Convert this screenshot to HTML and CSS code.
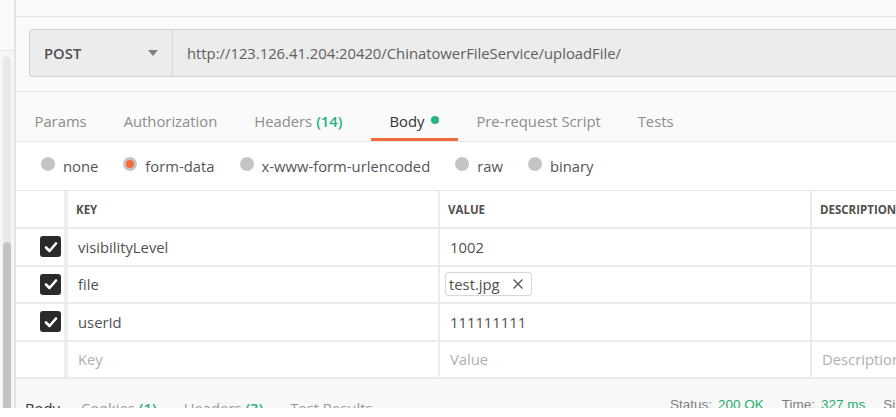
FILE: index.html
```html
<!DOCTYPE html>
<html>
<head>
<meta charset="utf-8">
<link rel="stylesheet" href="styles.css">
</head>
<body>
<div class="app">
  <aside class="sidebar">
    <div class="side-top"></div>
    <div class="side-body">
      <div class="track"><div class="thumb"></div></div>
    </div>
  </aside>
  <main class="main">
    <div class="top-strip"></div>
    <div class="url-area">
      <div class="url-bar">
        <div class="method">
          <span class="method-name">POST</span>
          <span class="caret"></span>
        </div>
        <div class="url-text">http://123.126.41.204:20420/ChinatowerFileService/uploadFile/</div>
      </div>
    </div>
    <nav class="tabs">
      <span class="tab">Params</span>
      <span class="tab">Authorization</span>
      <span class="tab">Headers <span class="count">(14)</span></span>
      <span class="tab active">Body <span class="dot"></span></span>
      <span class="tab">Pre-request Script</span>
      <span class="tab">Tests</span>
    </nav>
    <div class="radios">
      <label class="radio"><span class="circle"></span>none</label>
      <label class="radio"><span class="circle on"></span>form-data</label>
      <label class="radio"><span class="circle"></span>x-www-form-urlencoded</label>
      <label class="radio"><span class="circle"></span>raw</label>
      <label class="radio"><span class="circle"></span>binary</label>
    </div>
    <div class="table">
      <div class="row head">
        <div class="cell chk"></div>
        <div class="cell key">KEY</div>
        <div class="cell val">VALUE</div>
        <div class="cell desc">DESCRIPTION</div>
      </div>
      <div class="row">
        <div class="cell chk"><span class="checkbox"><svg width="14" height="12" viewBox="0 0 14 12"><path d="M2 6.5 L5.5 10 L12 2.5" fill="none" stroke="#fff" stroke-width="2.6" stroke-linecap="round" stroke-linejoin="round"/></svg></span></div>
        <div class="cell key">visibilityLevel</div>
        <div class="cell val">1002</div>
        <div class="cell desc"></div>
      </div>
      <div class="row">
        <div class="cell chk"><span class="checkbox"><svg width="14" height="12" viewBox="0 0 14 12"><path d="M2 6.5 L5.5 10 L12 2.5" fill="none" stroke="#fff" stroke-width="2.6" stroke-linecap="round" stroke-linejoin="round"/></svg></span></div>
        <div class="cell key">file</div>
        <div class="cell val file-cell"><span class="chip">test.jpg<svg class="x" width="12" height="12" viewBox="0 0 12 12"><path d="M1.5 1.5 L10.5 10.5 M10.5 1.5 L1.5 10.5" stroke="#555" stroke-width="1.4" fill="none"/></svg></span></div>
        <div class="cell desc"></div>
      </div>
      <div class="row">
        <div class="cell chk"><span class="checkbox"><svg width="14" height="12" viewBox="0 0 14 12"><path d="M2 6.5 L5.5 10 L12 2.5" fill="none" stroke="#fff" stroke-width="2.6" stroke-linecap="round" stroke-linejoin="round"/></svg></span></div>
        <div class="cell key">userId</div>
        <div class="cell val">111111111</div>
        <div class="cell desc"></div>
      </div>
      <div class="row">
        <div class="cell chk"></div>
        <div class="cell key ph">Key</div>
        <div class="cell val ph">Value</div>
        <div class="cell desc ph">Description</div>
      </div>
    </div>
    <div class="footer">
      <div class="resp-tabs">
        <span class="rtab active">Body</span>
        <span class="rtab">Cookies <span class="count">(1)</span></span>
        <span class="rtab">Headers <span class="count">(3)</span></span>
        <span class="rtab">Test Results</span>
      </div>
      <div class="status">
        <span>Status:</span><span class="green">200 OK</span>
        <span class="sp">Time:</span><span class="green">327 ms</span>
        <span class="sp">Size:</span><span class="green">263 B</span>
      </div>
    </div>
  </main>
</div>
<div class="cut"></div>
</body>
</html>
```
FILE: styles.css
```css
* { box-sizing: border-box; }
html, body { margin: 0; padding: 0; }
body {
  width: 896px;
  height: 417px;
  overflow: hidden;
  background: #fff;
  font-family: "Open Sans", "Noto Sans", sans-serif;
  font-size: 14.8px;
  color: #505050;
}
.app {
  display: flex;
  height: 408px;
}
.cut { height: 9px; background: #fff; }

.sidebar {
  width: 16px;
  flex: none;
  border-right: 2px solid #e3e3e3;
  display: flex;
  flex-direction: column;
  background: #f6f6f6;
}
.side-top {
  height: 51px;
  background: #fafafa;
  border-bottom: 1px solid #e6e6e6;
}
.side-body {
  flex: 1;
  padding: 5px 3px 0 3px;
  display: flex;
}
.track {
  width: 8px;
  flex: 1;
  background: #e9e9e9;
  border-radius: 4px 4px 0 0;
  display: flex;
  flex-direction: column;
  justify-content: flex-end;
}
.thumb {
  height: 166px;
  background: #c4c4c4;
  border-radius: 4px 4px 0 0;
}

.main {
  flex: 1;
  min-width: 0;
  overflow: hidden;
  display: flex;
  flex-direction: column;
  background: #fafafa;
}
.top-strip {
  height: 17px;
  flex: none;
  border-bottom: 1px solid #e6e6e6;
}
.url-area {
  height: 75px;
  flex: none;
  padding: 12px 0 0 13px;
  border-bottom: 1px solid #e6e6e6;
}
.url-bar {
  width: 1000px;
  height: 48px;
  display: flex;
  background: #ececec;
  border: 1px solid #d3d3d3;
  border-radius: 3px;
}
.method {
  width: 143px;
  flex: none;
  display: flex;
  align-items: center;
  justify-content: space-between;
  padding: 0 14px 0 14px;
  border-right: 1px solid #d6d6d6;
}
.method-name {
  font-weight: 600;
  color: #505050;
}
.caret {
  width: 0;
  height: 0;
  border-left: 5px solid transparent;
  border-right: 5px solid transparent;
  border-top: 6px solid #808080;
}
.url-text {
  display: flex;
  align-items: center;
  padding-left: 14px;
  color: #606060;
  white-space: nowrap;
}

.tabs {
  height: 50px;
  flex: none;
  display: flex;
  align-items: stretch;
  border-bottom: 1px solid #e6e6e6;
}
.tab {
  display: flex;
  align-items: center;
  gap: 4px;
  padding: 12px 18.5px 0;
  color: #8c8c8c;
  border-bottom: 3px solid transparent;
  white-space: nowrap;
}
.tab.active {
  color: #333;
  border-bottom-color: #f26b3a;
  gap: 7px;
  margin-left: 10px;
}
.count { color: #26b47f; font-weight: 600; }
.dot {
  width: 8px;
  height: 8px;
  border-radius: 50%;
  background: #26b47f;
  margin-top: -3px;
}

.radios {
  height: 48px;
  flex: none;
  background: #fff;
  display: flex;
  align-items: center;
  gap: 25px;
  padding: 0 0 0 25px;
}
.radio {
  display: flex;
  align-items: center;
  gap: 8px;
  color: #555;
}
.circle {
  width: 14px;
  height: 14px;
  border-radius: 50%;
  background: #c4c4c4;
  margin-top: -5px;
  display: flex;
  align-items: center;
  justify-content: center;
}
.circle.on::after {
  content: "";
  width: 8px;
  height: 8px;
  border-radius: 50%;
  background: #f26b3a;
}

.table {
  flex: none;
  background: #fff;
  border-top: 1px solid #e6e6e6;
}
.row {
  display: grid;
  grid-template-columns: 52px 372px 372px 1fr;
  height: 37.5px;
  border-bottom: 2px solid #ebebeb;
}
.row.head { height: 38px; }
.cell {
  display: flex;
  align-items: center;
  padding-left: 10px;
  white-space: nowrap;
  overflow: hidden;
  border-right: 2px solid #ebebeb;
}
.cell.chk {
  border-right: 4px solid #eeeeee;
  justify-content: flex-end;
  padding: 0 3px 0 0;
}
.cell.desc { border-right: none; }
.head .cell {
  font-size: 11.5px;
  font-weight: 700;
  color: #505050;
  padding-left: 8px;
}
.head .cell.chk { padding-left: 0; }
.checkbox {
  width: 21px;
  height: 21px;
  border-radius: 3px;
  background: #2a2a2a;
  display: flex;
  align-items: center;
  justify-content: center;
}
.ph { color: #b0b0b0; }
.cell.file-cell { padding-left: 5px; }
.chip {
  display: flex;
  align-items: center;
  gap: 12px;
  height: 24px;
  padding: 0 7px 0 3px;
  border: 1px solid #d8d8d8;
  border-radius: 3px;
  color: #505050;
}

.footer {
  flex: 1;
  display: grid;
  grid-template-columns: 654px 1fr;
  background: #f8f8f8;
  overflow: hidden;
}
.resp-tabs {
  display: flex;
  gap: 27px;
  padding: 19px 0 0 9px;
  white-space: nowrap;
}
.rtab { color: #9a9a9a; }
.rtab.active { color: #333; margin-right: -6px; }
.status {
  display: flex;
  gap: 6px;
  padding: 18px 0 0 0;
  font-family: "Liberation Sans", Arial, sans-serif;
  font-size: 13.5px;
  color: #808080;
  white-space: nowrap;
  overflow: hidden;
}
.status .sp { margin-left: 12px; }
.status .green { font-weight: 400; }
.green { color: #1fae6e; }
```
